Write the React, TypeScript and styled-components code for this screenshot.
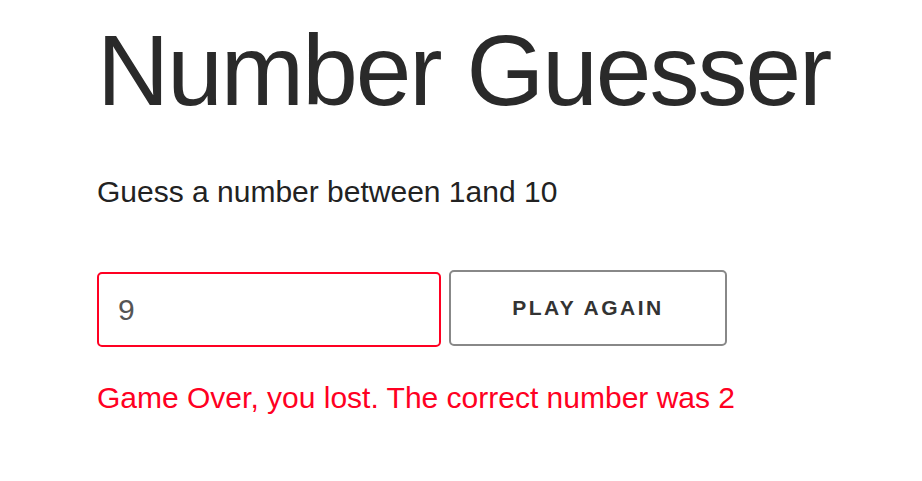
import React, { useState, FormEvent } from 'react'
import styled, { createGlobalStyle } from 'styled-components'

const GlobalStyle = createGlobalStyle`
    body {
        margin: 0;
        background: #fff;
        font-family: "Liberation Sans", Arial, sans-serif;
        color: #262626;
    }
`

const Main = styled.div`
    display: flex;
    flex-direction: column;
    align-items: flex-start;
    padding: 13px 0 0 97px;
`

const Title = styled.h1`
    margin: 0;
    font-size: 100px;
    font-weight: 400;
    letter-spacing: -2px;
    color: #2a2a2a;
`

const Hint = styled.p`
    margin: 47px 0 0;
    font-size: 30px;
    color: #222;
`

const GuessForm = styled.form`
    display: flex;
    align-items: flex-start;
    gap: 8px;
    margin-top: 61px;
`

const GuessInput = styled.input<{ $wrong?: boolean }>`
    box-sizing: border-box;
    width: 344px;
    height: 75px;
    margin-top: 2px;
    padding: 0 19px;
    border: 2px solid ${p => (p.$wrong ? '#ff0022' : '#888')};
    border-radius: 5px;
    outline: none;
    font-family: "Liberation Sans", Arial, sans-serif;
    font-size: 30px;
    color: #555;
`

const PlayButton = styled.button`
    box-sizing: border-box;
    width: 278px;
    height: 76px;
    border: 2px solid #888;
    border-radius: 5px;
    background: #fff;
    font-family: "Liberation Sans", Arial, sans-serif;
    font-size: 21px;
    font-weight: 700;
    letter-spacing: 2.5px;
    text-transform: uppercase;
    color: #333;
    cursor: pointer;
`

const Message = styled.p<{ $lost?: boolean }>`
    margin: 34px 0 0;
    font-size: 30px;
    color: ${p => (p.$lost ? '#ff0022' : '#222')};
`

const App = () => {
    const [guess, setGuess] = useState('9')
    const [answer] = useState(2)

    function handleGuess(e: FormEvent<HTMLInputElement>) {
        setGuess(e.currentTarget.value)
    }

    return (
        <Main>
            <GlobalStyle />
            <Title>Number Guesser</Title>
            <Hint>Guess a number between 1and 10</Hint>
            <GuessForm onSubmit={e => e.preventDefault()}>
                <GuessInput type="number" value={guess} onChange={handleGuess} $wrong />
                <PlayButton type="submit">Play Again</PlayButton>
            </GuessForm>
            <Message $lost>Game Over, you lost. The correct number was {answer}</Message>
        </Main>
    )
}

export default App
